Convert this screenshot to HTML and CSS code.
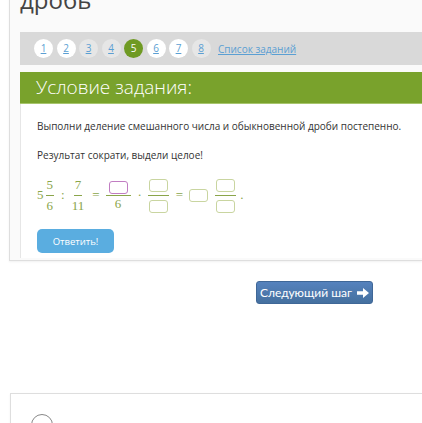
FILE: index.html
```html
<!DOCTYPE html>
<html lang="ru">
<head>
    <meta charset="UTF-8">
    <meta name="viewport" content="width=device-width, initial-scale=1.0">
    <title>Деление дробей</title>
    <link rel="stylesheet" href="styles.css">
</head>
<body>

    <div class="page">
        <div class="card">
            <h1 class="title">дробь</h1>

            <div class="steps">
                <a class="step" href="#">1</a>
                <a class="step" href="#">2</a>
                <a class="step visited" href="#">3</a>
                <a class="step visited" href="#">4</a>
                <span class="step current">5</span>
                <a class="step" href="#">6</a>
                <a class="step" href="#">7</a>
                <a class="step visited" href="#">8</a>
                <a class="task-list" href="#">Список заданий</a>
            </div>

            <div class="task-head">Условие задания:</div>

            <div class="task-body">
                <p>Выполни деление смешанного числа и обыкновенной дроби постепенно.</p>
                <p>Результат сократи, выдели целое!</p>

                <div class="math">
                    <span>5</span>
                    <span class="frac"><span>5</span><span>6</span></span>
                    <span class="op">:</span>
                    <span class="frac"><span>7</span><span>11</span></span>
                    <span class="op">=</span>
                    <span class="frac wide"><span><i class="box active"></i></span><span>6</span></span>
                    <span class="op">·</span>
                    <span class="frac"><span><i class="box"></i></span><span><i class="box"></i></span></span>
                    <span class="op">=</span>
                    <i class="box whole"></i>
                    <span class="frac"><span><i class="box"></i></span><span><i class="box"></i></span></span>
                    <span class="dot">.</span>
                </div>

                <button class="answer-btn">Ответить!</button>
            </div>
        </div>

        <div class="next-row">
            <button class="next-btn">Следующий шаг
                <svg class="arrow" width="12" height="10" viewBox="0 0 12 10">
                    <path d="M0 3.2 H6 V0 L12 5 L6 10 V6.8 H0 Z" fill="#fff"/>
                </svg>
            </button>
        </div>

        <div class="card next-card">
            <span class="circle"></span>
        </div>
    </div>

</body>
</html>
```

FILE: styles.css
```css
/* Basic reset */
* {
    margin: 0;
    padding: 0;
    box-sizing: border-box;
}

body {
    font-family: 'Open Sans', 'Liberation Sans', sans-serif;
    background: #ffffff;
    color: #333;
    overflow: hidden;
}

.page {
    padding-left: 9px;
}

.card {
    background-color: #fafafa;
    border-left: 1px solid #dedede;
    border-bottom: 1px solid #dedede;
    box-shadow: 0 1px 2px rgba(0, 0, 0, 0.06);
    padding: 0 0 2px 10px;
}

.title {
    font-size: 24px;
    font-weight: 400;
    line-height: 28px;
    color: #444;
    margin-top: -14px;
    margin-bottom: 18px;
}

.steps {
    display: flex;
    align-items: center;
    gap: 3.5px;
    height: 33px;
    padding-left: 14px;
    background-color: #d9d9d9;
}

.step {
    width: 19px;
    height: 19px;
    border-radius: 50%;
    background-color: #fff;
    color: #5b9fd3;
    font-size: 10px;
    line-height: 19px;
    text-align: center;
    text-decoration: underline;
}

.step.visited {
    background-color: #e6e6e6;
}

.step.current {
    background-color: #6f9a23;
    color: #fff;
    text-decoration: none;
}

.task-list {
    margin-left: 4px;
    font-size: 10px;
    color: #5b9fd3;
}

.task-head {
    margin-top: 7px;
    height: 32px;
    background-color: #79a22c;
    border-bottom: 1px solid #a7c56c;
    color: #fff;
    font-size: 19px;
    font-weight: 300;
    line-height: 31px;
    padding-left: 16px;
}

.task-body {
    background-color: #fff;
    border-left: 1px solid #e6e6e6;
    padding: 15px 16px 5px 16px;
}

.task-body p {
    font-size: 10px;
    line-height: 15px;
    color: #333;
    white-space: nowrap;
    margin-bottom: 14px;
}

.math {
    display: flex;
    align-items: center;
    font-family: 'Liberation Serif', serif;
    font-size: 13px;
    color: #8aa54a;
    height: 44px;
    margin-top: -4px;
}

.frac {
    display: inline-flex;
    flex-direction: column;
    align-items: center;
    margin: 0 3px 0 2px;
}

.frac span {
    line-height: 16px;
    padding: 0 1px;
}

.frac span:first-child {
    border-bottom: 1px solid #8aa54a;
    padding-bottom: 2px;
}

.frac span:last-child {
    padding-top: 2px;
}

.frac.wide span {
    padding: 0 3px;
}

.op {
    margin: 0 4px;
}

.box {
    display: inline-block;
    width: 19px;
    height: 13px;
    border: 1.5px solid #c9d5a0;
    border-radius: 3px;
    vertical-align: middle;
}

.box.active {
    border-color: #c17dc2;
}

.box.whole {
    margin: 0 5px 0 2px;
}

.dot {
    margin-left: 1px;
}

.answer-btn {
    margin-top: 12px;
    width: 77px;
    height: 24px;
    background-color: #5aade0;
    border: none;
    border-radius: 5px;
    color: #fff;
    font-family: 'Open Sans', 'Liberation Sans', sans-serif;
    font-size: 9.5px;
}

.next-row {
    display: flex;
    padding: 20px 0 0 247px;
}

.next-btn {
    display: flex;
    align-items: center;
    justify-content: center;
    gap: 5px;
    width: 117px;
    height: 23px;
    background: linear-gradient(to bottom, #5582bd, #45709f);
    border: 1px solid #3f6797;
    border-radius: 3px;
    color: #fff;
    font-family: 'Lato', 'Liberation Sans', sans-serif;
    font-size: 12px;
}

.next-card {
    margin-top: 89px;
    margin-left: 1px;
    height: 40px;
    background-color: #fff;
    border-top: 1px solid #dedede;
    padding: 20px 0 0 20px;
}

.circle {
    display: block;
    width: 22px;
    height: 22px;
    border: 1px solid #888;
    border-radius: 50%;
}
```
